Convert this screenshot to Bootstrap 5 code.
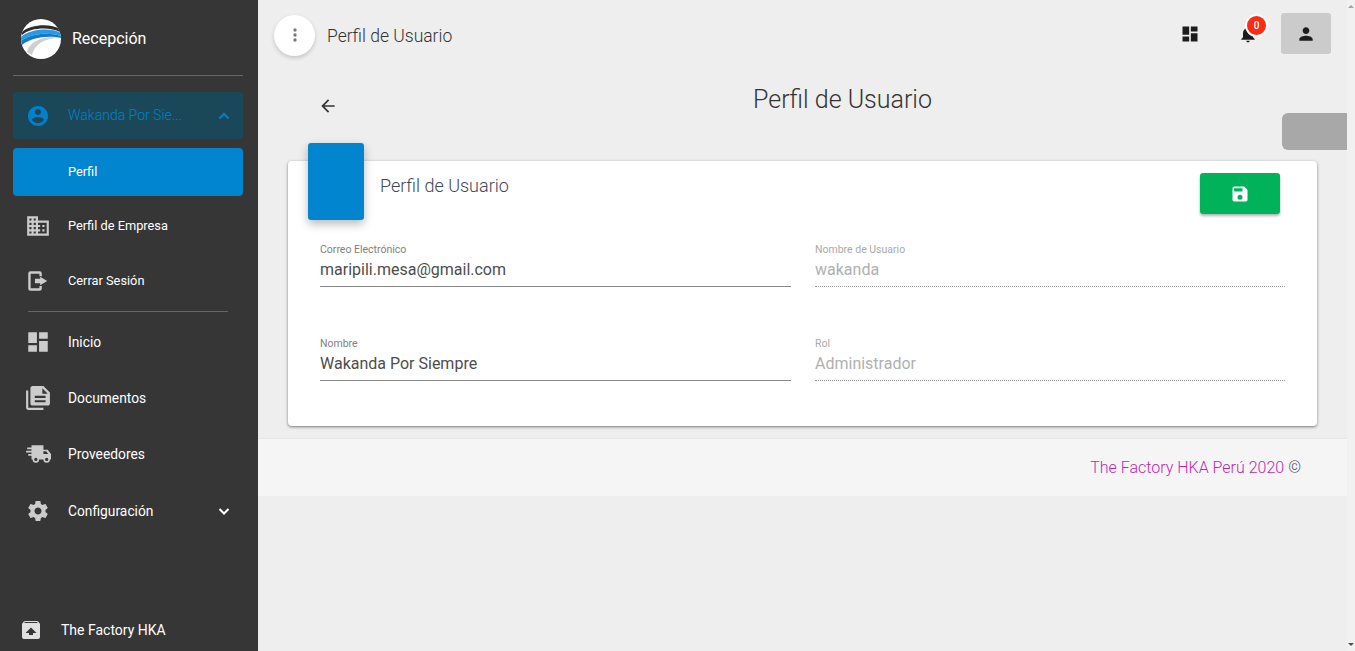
<!DOCTYPE html>
<html lang="es">
<head>
    <meta charset="UTF-8">
    <title>Perfil de Usuario</title>
    <link href="https://cdn.jsdelivr.net/npm/bootstrap@5.3.0/dist/css/bootstrap.min.css" rel="stylesheet">
    <script src="https://cdn.jsdelivr.net/npm/bootstrap@5.3.0/dist/js/bootstrap.bundle.min.js"></script>
    <style>
        html, body { height: 100%; }
        body {
            font-family: Roboto, "Liberation Sans", sans-serif;
            background: #eee;
            overflow: hidden;
            color: #333;
        }
        .app-shell { height: 651px; }
        /* sidebar */
        .side-bar {
            width: 258px;
            background: #363636;
            color: #fff;
            padding: 0 15px 0 13px;
        }
        .brand-row { height: 76px; padding: 2px 0 0 8px; border-bottom: 1px solid #666; gap: 11px; }
        .brand-name { font-size: 16px; font-weight: 400; }
        .menu-item {
            height: 48px;
            border-radius: 4px;
            padding-left: 13px;
            padding-right: 12px;
            font-size: 13.8px;
            color: #fff;
            text-decoration: none;
        }
        .menu-item svg.lead-ico { width: 24px; height: 24px; fill: #ccc; flex: none; margin-right: 18px; }
        .menu-item svg.big-ico { width: 26px; height: 26px; margin-left: -1px; margin-right: 17px; }
        .menu-small { font-size: 12.8px; }
        .menu-open { margin-top: 16px; background: #1a4859; color: #0281ca; height: 47px; font-weight: 300; font-size: 14px; }
        .menu-open svg.lead-ico { fill: #0281ca; }
        .menu-active { margin-top: 9px; background: #0285cf; height: 48px; padding-left: 55px; }
        .gap-a { margin-top: 6px; }
        .gap-b { margin-top: 7px; }
        .gap-c { margin-top: 8px; }
        .gap-d { margin-top: 9px; }
        .side-rule { height: 1px; background: #666; margin: 6px 15px 6px 15px; }
        .menu-end { width: 14px; height: 14px; margin-left: auto; fill: none; stroke-width: 2; }
        .side-foot { height: 48px; padding-left: 6px; font-size: 14px; margin-top: auto; margin-bottom: -3px; }
        .side-foot svg { width: 24px; height: 24px; fill: #e0e0e0; margin-right: 18px; flex: none; }
        /* main */
        .main-col { width: 1089px; }
        .scroll-rail { width: 8px; background: #f1f1f1; position: relative; }
        .rail-up, .rail-down { position: absolute; left: 1px; width: 0; height: 0; border-left: 3px solid transparent; border-right: 3px solid transparent; }
        .rail-up { top: 5px; border-bottom: 3px solid #a3a3a3; }
        .rail-down { bottom: 5px; border-top: 3px solid #505050; }
        .top-bar { height: 70px; padding: 0 16px; }
        .round-btn {
            width: 41px; height: 41px; border-radius: 50%;
            background: #fff;
            box-shadow: 0 2px 4px rgba(0,0,0,.18);
            margin-right: 12px;
        }
        .top-title { font-size: 17.5px; font-weight: 300; color: #333; margin-top: 2px; }
        .top-tools { margin-bottom: 3px; }
        .top-ico { fill: #1c1c1c; }
        .user-btn { width: 50px; height: 41px; background: #cbcbcb; border-radius: 3px; }
        .bell-wrap { position: relative; width: 20px; height: 20px; margin-left: 38px; margin-right: 23px; }
        .bell-badge {
            position: absolute; top: -10px; left: 7px;
            width: 23px; height: 23px; border-radius: 50%;
            background: #fb2b14; border: 2px solid #fff;
            color: #fff; font-size: 10px; font-weight: 500;
            display: flex; align-items: center; justify-content: center;
        }
        .page-head { height: 91px; position: relative; padding-left: 60px; }
        .back-arrow { width: 20px; height: 20px; fill: #333; margin-top: 26px; flex: none; }
        .page-title { font-size: 25px; font-weight: 300; color: #333; position: absolute; left: 80px; right: 0; top: 15px; text-align: center; margin: 0; line-height: 30px; }
        .side-pill {
            position: absolute; right: 0; top: 43px;
            width: 65px; height: 37px; background: #a8a8a8;
            border-radius: 6px 0 0 6px;
        }
        .form-card {
            margin: 0 30px;
            height: 265px;
            background: #fff;
            border-radius: 4px;
            box-shadow: 0 1px 3px rgba(0,0,0,.5);
            position: relative;
            padding: 0 32px;
        }
        .card-tab {
            position: absolute; left: 20px; top: -18px;
            width: 56px; height: 77px;
            background: #0285cf;
            border-radius: 3px;
            box-shadow: 0 4px 10px rgba(0,0,0,.28);
        }
        .card-title { font-size: 18px; font-weight: 300; color: #3c4858; margin: 0 0 0 60px; padding-top: 13px; line-height: 24px; }
        .save-btn {
            position: absolute; right: 37px; top: 12px;
            width: 80px; height: 41px; background: #00b259;
            border-radius: 3px;
            box-shadow: 0 2px 3px rgba(0,0,0,.3);
        }
        .form-rows { padding-top: 44px; column-gap: 24px; row-gap: 0; display: grid; grid-template-columns: 471px 470px; }
        .field-box { height: 94px; }
        .field-label { font-size: 10.5px; font-weight: 400; color: #808080; line-height: 12px; padding-top: 2px; }
        .field-value { font-size: 16px; font-weight: 400; color: #4d4d4d; line-height: 24px; margin-top: 2px; padding-bottom: 4px; border-bottom: 1px solid #888; }
        .field-off .field-label { color: #aaa; }
        .field-off .field-value { color: #b0b0b0; border-bottom: 1px dotted #999; }
        .foot-bar {
            margin-top: 12px; height: 58px;
            background: #f5f5f5;
            border-top: 1px solid #e7e7e7;
            padding-right: 46px;
            font-size: 16px; font-weight: 300; color: #3c4858;
        }
        .foot-link { color: #c026b5; margin-right: 4px; }
    </style>
</head>
<body>
<div class="app-shell d-flex">
    <aside class="side-bar d-flex flex-column flex-shrink-0">
        <div class="brand-row d-flex align-items-center">
            <svg width="40" height="40" viewBox="0 0 40 40">
                <defs><clipPath id="logoClip"><circle cx="20" cy="20" r="20"/></clipPath></defs>
                <circle cx="20" cy="20" r="20" fill="#fff"/>
                <g clip-path="url(#logoClip)">
                    <path d="M1 13C9 5 30 4 39 10V13C30 8 10 8 1 16Z" fill="#2e2e2e"/>
                    <path d="M0 18C8 10 30 8 40 14V17C28 13 10 14 0 22Z" fill="#2a9be0"/>
                    <path d="M0 22C10 14 28 13 40 17V19C28 16 10 18 1 26Z" fill="#1478d0"/>
                    <path d="M6 33C8 22 24 16 39 19C28 19 15 22 11 36Z" fill="#cfcfcf"/>
                </g>
            </svg>
            <span class="brand-name">Recepción</span>
        </div>

        <a class="menu-item menu-open d-flex align-items-center" href="#">
            <svg class="lead-ico" viewBox="0 0 24 24"><path d="M12 2C6.480 2 2 6.480 2 12s4.480 10 10 10 10-4.480 10-10S17.520 2 12 2zm0 3c1.660 0 3 1.340 3 3s-1.340 3-3 3-3-1.340-3-3 1.340-3 3-3zm0 14.200c-2.500 0-4.710-1.280-6-3.220.03-1.990 4-3.080 6-3.080 1.990 0 5.970 1.090 6 3.080-1.290 1.940-3.500 3.220-6 3.220z"/></svg>
            <span>Wakanda Por Sie...</span>
            <svg class="menu-end" viewBox="0 0 14 14" stroke="#0281ca"><path d="M2.500 9.500L7 5l4.500 4.500"/></svg>
        </a>
        <a class="menu-item menu-active menu-small d-flex align-items-center" href="#">Perfil</a>

        <a class="menu-item menu-small d-flex align-items-center gap-a" href="#">
            <svg class="lead-ico big-ico" viewBox="0 0 24 24"><path d="M12 7V3H2v18h20V7H12zM6 19H4v-2h2v2zm0-4H4v-2h2v2zm0-4H4V9h2v2zm0-4H4V5h2v2zm4 12H8v-2h2v2zm0-4H8v-2h2v2zm0-4H8V9h2v2zm0-4H8V5h2v2zm10 12h-8v-2h2v-2h-2v-2h2v-2h-2V9h8v10zm-2-8h-2v2h2v-2zm0 4h-2v2h2v-2z"/></svg>
            <span>Perfil de Empresa</span>
        </a>
        <a class="menu-item menu-small d-flex align-items-center gap-b" href="#">
            <svg class="lead-ico big-ico" viewBox="0 0 24 24"><path d="M9.200 10H14V8l6.500 4-6.500 4v-2H9.200z"/><path d="M5 3h8.500a2 2 0 0 1 2 2v2.500h-2.200V5.200H5.200v13.600h8.100v-2.300h2.200V19a2 2 0 0 1-2 2H5a2 2 0 0 1-2-2V5a2 2 0 0 1 2-2z"/></svg>
            <span>Cerrar Sesión</span>
        </a>
        <div class="side-rule"></div>
        <a class="menu-item d-flex align-items-center" href="#">
            <svg class="lead-ico big-ico" viewBox="0 0 24 24"><path d="M3 13h8V3H3v10zm0 8h8v-6H3v6zm10 0h8V11h-8v10zm0-18v6h8V3h-8z"/></svg>
            <span>Inicio</span>
        </a>
        <a class="menu-item d-flex align-items-center gap-c" href="#">
            <svg class="lead-ico big-ico" viewBox="0 0 24 24"><path d="M3 5H1v16c0 1.100.9 2 2 2h14v-2H3V5zm14-4H7c-1.100 0-2 .9-2 2v14c0 1.100.9 2 2 2h14c1.100 0 2-.9 2-2V7l-6-6zm2 15H9v-2h10v2zm0-4H9v-2h10v2zm-3-4V3l5 5h-5z"/></svg>
            <span>Documentos</span>
        </a>
        <a class="menu-item d-flex align-items-center gap-c" href="#">
            <svg class="lead-ico big-ico" viewBox="0 0 24 24"><path d="M20 8h-3V4H6v2H2v1.500h4V9H1v1.500h5V12H3v1.500h3V17h1a3 3 0 0 0 6 0h4a3 3 0 0 0 6 0h1v-5l-3-4zM10 18.500A1.500 1.500 0 1 1 10 15.500a1.500 1.500 0 0 1 0 3zm10 0a1.500 1.500 0 1 1 0-3 1.500 1.500 0 0 1 0 3zM17 12V9.500h2.500l2 2.500H17z"/></svg>
            <span>Proveedores</span>
        </a>
        <a class="menu-item d-flex align-items-center gap-d" href="#">
            <svg class="lead-ico" viewBox="0 0 24 24"><path d="M19.430 12.980c.04-.32.07-.64.07-.98s-.03-.66-.07-.98l2.110-1.650c.19-.15.24-.42.12-.64l-2-3.460c-.12-.22-.39-.3-.61-.22l-2.490 1c-.52-.4-1.080-.73-1.690-.98l-.38-2.650C14.460 2.180 14.250 2 14 2h-4c-.25 0-.46.18-.49.42l-.38 2.650c-.61.25-1.170.59-1.690.98l-2.490-1c-.23-.09-.49 0-.61.22l-2 3.460c-.13.22-.07.49.12.64l2.110 1.650c-.04.32-.07.65-.07.98s.03.66.07.98l-2.110 1.650c-.19.15-.24.42-.12.64l2 3.460c.12.22.39.3.61.22l2.490-1c.52.4 1.080.73 1.690.98l.38 2.650c.03.24.24.42.49.42h4c.25 0 .46-.18.49-.42l.38-2.650c.61-.25 1.170-.59 1.690-.98l2.490 1c.23.09.49 0 .61-.22l2-3.460c.12-.22.07-.49-.12-.64l-2.110-1.650zM12 15.500c-1.930 0-3.500-1.570-3.500-3.500s1.570-3.500 3.500-3.500 3.500 1.570 3.500 3.500-1.570 3.500-3.500 3.500z"/></svg>
            <span>Configuración</span>
            <svg class="menu-end" viewBox="0 0 14 14" stroke="#fff"><path d="M2.500 5l4.500 4.500L11.500 5"/></svg>
        </a>
        <div class="side-foot d-flex align-items-center">
            <svg viewBox="0 0 24 24"><path d="M20.550 5.220l-1.390-1.680C18.880 3.210 18.470 3 18 3H6c-.47 0-.88.21-1.160.55L3.460 5.220C3.170 5.570 3 6.010 3 6.500V19c0 1.100.89 2 2 2h14c1.100 0 2-.9 2-2V6.500c0-.49-.17-.93-.45-1.280zM12 9.500l5.500 5.500H14v2h-4v-2H6.500L12 9.500zM5.120 5l.82-1h12l.93 1H5.120z"/></svg>
            <span>The Factory HKA</span>
        </div>
    </aside>

    <main class="main-col d-flex flex-column flex-shrink-0">
        <div class="top-bar d-flex align-items-center">
            <div class="round-btn d-flex align-items-center justify-content-center">
                <svg width="20" height="20" viewBox="0 0 24 24" fill="#777"><path d="M12 8a2 2 0 1 0 0-4 2 2 0 0 0 0 4zm0 2a2 2 0 1 0 0 4 2 2 0 0 0 0-4zm0 6a2 2 0 1 0 0 4 2 2 0 0 0 0-4z"/></svg>
            </div>
            <span class="top-title">Perfil de Usuario</span>
            <div class="top-tools d-flex align-items-center ms-auto">
                <svg class="top-ico" width="20" height="20" viewBox="0 0 24 24"><path d="M3 13h8V3H3v10zm0 8h8v-6H3v6zm10 0h8V11h-8v10zm0-18v6h8V3h-8z"/></svg>
                <div class="bell-wrap">
                    <svg class="top-ico d-block" width="20" height="20" viewBox="0 0 24 24"><path d="M12 22c1.100 0 2-.9 2-2h-4c0 1.100.9 2 2 2zm6-6v-5c0-3.070-1.630-5.640-4.500-6.320V4c0-.83-.67-1.500-1.500-1.500s-1.500.67-1.500 1.500v.68C7.640 5.360 6 7.920 6 11v5l-2 2v1h16v-1l-2-2z"/></svg>
                    <span class="bell-badge">0</span>
                </div>
                <div class="user-btn d-flex align-items-center justify-content-center">
                    <svg class="top-ico" width="20" height="20" viewBox="0 0 24 24"><path d="M12 12c2.210 0 4-1.790 4-4s-1.790-4-4-4-4 1.790-4 4 1.790 4 4 4zm0 2c-2.670 0-8 1.340-8 4v2h16v-2c0-2.660-5.330-4-8-4z"/></svg>
                </div>
            </div>
        </div>

        <div class="page-head d-flex">
            <svg class="back-arrow" viewBox="0 0 24 24"><path d="M20 11H7.830l5.590-5.590L12 4l-8 8 8 8 1.410-1.410L7.830 13H20v-2z"/></svg>
            <h1 class="page-title">Perfil de Usuario</h1>
            <div class="side-pill"></div>
        </div>

        <section class="form-card">
            <div class="card-tab"></div>
            <h2 class="card-title">Perfil de Usuario</h2>
            <div class="save-btn d-flex align-items-center justify-content-center">
                <svg width="20" height="20" viewBox="0 0 24 24" fill="#fff"><path d="M17 3H5a2 2 0 0 0-2 2v14a2 2 0 0 0 2 2h14a2 2 0 0 0 2-2V7l-4-4zm-5 16a3 3 0 1 1 0-6 3 3 0 0 1 0 6zm3-10H5V5h10v4z"/></svg>
            </div>
            <div class="form-rows">
                <div class="field-box">
                    <div class="field-label">Correo Electrónico</div>
                    <div class="field-value">maripili.mesa@gmail.com</div>
                </div>
                <div class="field-box field-off">
                    <div class="field-label">Nombre de Usuario</div>
                    <div class="field-value">wakanda</div>
                </div>
                <div class="field-box">
                    <div class="field-label">Nombre</div>
                    <div class="field-value">Wakanda Por Siempre</div>
                </div>
                <div class="field-box field-off">
                    <div class="field-label">Rol</div>
                    <div class="field-value">Administrador</div>
                </div>
            </div>
        </section>

        <footer class="foot-bar d-flex align-items-center justify-content-end">
            <span class="foot-link">The Factory HKA Perú 2020</span> ©
        </footer>
    </main>
    <div class="scroll-rail flex-shrink-0"><span class="rail-up"></span><span class="rail-down"></span></div>
</div>
</body>
</html>
